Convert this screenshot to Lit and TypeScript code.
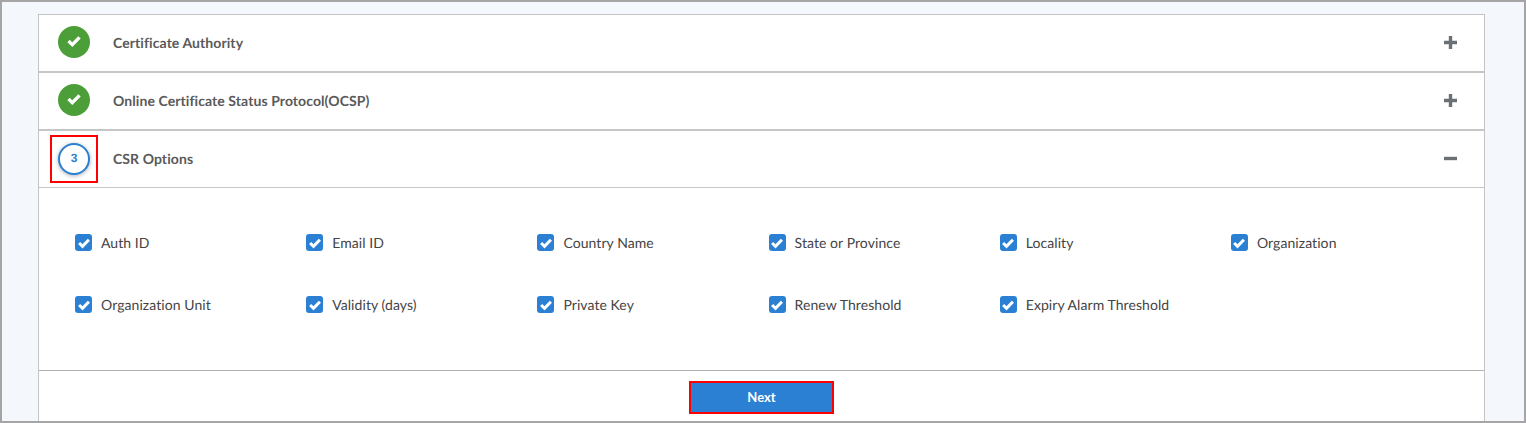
import { LitElement, html, css } from "lit";
import { customElement } from "lit/decorators.js";

const check = html`<svg viewBox="0 0 16 16" class="tick"><path d="M3.1 8 6.5 11.3 12.9 4.8" fill="none" stroke="#fff" stroke-width="3"/></svg>`;
const opts = ["Auth ID","Email ID","Country Name","State or Province","Locality","Organization","Organization Unit","Validity (days)","Private Key","Renew Threshold","Expiry Alarm Threshold"];

@customElement("app-root")
export class AppRoot extends LitElement {
  static styles = css`
    :host { display: block; height: 423px; overflow: hidden; font-family: Lato, sans-serif; text-rendering: geometricPrecision; font-variant-ligatures: none; }
    * { box-sizing: border-box; }
    .page { height: 423px; background: #f4f7fc; border: 2px solid #a5a5a5; padding: 12px 39px 0 36px; overflow: hidden; }
    .card { background: #fff; border: 1px solid #c4c4c4; border-bottom: 0; height: 409px; display: flex; flex-direction: column; }
    .row { height: 58px; flex: none; display: flex; align-items: center; padding: 0 27px 2px 11px; border-bottom: 2px solid #c6c6c6; }
    .row.open { border-bottom: 1px solid #c6c6c6; height: 57px; padding-bottom: 1px; }
    .mark { width: 48px; height: 48px; flex: none; display: flex; align-items: center; justify-content: center; }
    .mark.hl { border: 2px solid #f00; }
    .done { width: 32px; height: 32px; border-radius: 50%; background: #4c9f38; display: flex; align-items: center; justify-content: center; }
    .done svg { width: 18px; height: 18px; display: block; margin-top: -2px; }
    .step { width: 32px; height: 32px; border-radius: 50%; background: #fff; border: 2px solid #2b80d3; color: #2b80d3; font: bold 12px "Liberation Sans", sans-serif; display: flex; align-items: center; justify-content: center; box-shadow: 0 1px 4px rgba(0,0,0,.3); padding-bottom: 2px; }
    .title { margin-left: 15px; flex: 1; font-size: 14px; font-weight: 700; color: #5a5a5a; letter-spacing: 0.08px; }
    .sign { width: 13px; height: 13px; flex: none; display: block; }
    .body { height: 182px; flex: none; padding: 46px 0 0 36px; display: grid; grid-template-columns: repeat(6, 231.2px); grid-auto-rows: 62px; align-content: start; }
    .opt { display: flex; align-items: flex-start; gap: 9px; font-size: 14px; color: #444; line-height: 18px; letter-spacing: 0.07px; }
    .box { width: 17px; height: 17px; flex: none; border-radius: 3px; background: #2b80d3; display: flex; align-items: center; justify-content: center; }
    .box svg { width: 16px; height: 16px; display: block; }
    .foot { flex: 1; border-top: 1px solid #b2b2b2; display: flex; justify-content: center; padding: 10px 0 0 0; }
    .next { width: 145px; height: 33px; background: #2b80d3; border: 2px solid #f00; color: #fff; font: 700 13px/26px Lato, sans-serif; padding: 0 0 1px; }
  `;
  render() {
    const plus = html`<svg class="sign" viewBox="0 0 13 13"><path d="M0 6.5H13M6.5 0V13" stroke="#6b7075" stroke-width="3.4"/></svg>`;
    const minus = html`<svg class="sign" viewBox="0 0 13 13"><path d="M0 6.5H13" stroke="#6b7075" stroke-width="3.4"/></svg>`;
    return html`<div class="page"><div class="card">
      <div class="row"><div class="mark"><div class="done">${check}</div></div><div class="title">Certificate Authority</div>${plus}</div>
      <div class="row"><div class="mark"><div class="done">${check}</div></div><div class="title">Online Certificate Status Protocol(OCSP)</div>${plus}</div>
      <div class="row open"><div class="mark hl"><div class="step">3</div></div><div class="title">CSR Options</div>${minus}</div>
      <div class="body">${opts.map(o => html`<div class="opt"><span class="box">${check}</span><span>${o}</span></div>`)}</div>
      <div class="foot"><button class="next">Next</button></div>
    </div></div>`;
  }
}
